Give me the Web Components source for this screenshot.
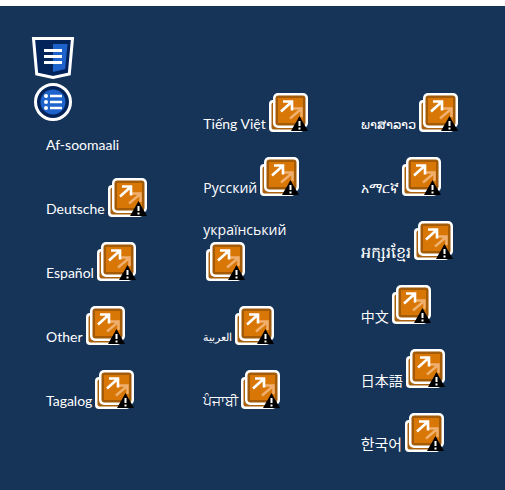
<!DOCTYPE html>
<html lang="en">
<head>
<meta charset="utf-8">
<title>Languages</title>
<style>
  html { background: #fff; }
  body { margin: 0; padding-top: 6px; box-sizing: border-box; min-height: 100vh; display: flex; flex-direction: column; }
</style>
</head>
<body>
<language-panel>
  <language-column>
    <badge-stack slot="top"></badge-stack>
    <language-link lang="so" plain>Af-soomaali</language-link>
    <language-link lang="de">Deutsche</language-link>
    <language-link lang="es">Español</language-link>
    <language-link lang="en">Other</language-link>
    <language-link lang="tl">Tagalog</language-link>
  </language-column>
  <language-column class="lower">
    <language-link lang="vi">Tiếng Việt</language-link>
    <language-link lang="ru">Русский</language-link>
    <language-link lang="uk">український</language-link>
    <language-link lang="ar">العربية</language-link>
    <language-link lang="pa">ਪੰਜਾਬੀ</language-link>
  </language-column>
  <language-column class="lower">
    <language-link lang="lo">ພາສາລາວ</language-link>
    <language-link lang="am">አማርኛ</language-link>
    <language-link lang="km">អក្សរខ្មែរ</language-link>
    <language-link lang="zh">中文</language-link>
    <language-link lang="ja">日本語</language-link>
    <language-link lang="ko">한국어</language-link>
  </language-column>
</language-panel>
<script>
class ShadowElement extends HTMLElement {
  constructor() {
    super();
    this.attachShadow({ mode: 'open' }).innerHTML = this.constructor.markup;
  }
}

customElements.define('language-panel', class extends ShadowElement {
  static markup = `
    <style>
      :host { flex: 1; display: grid; grid-template-columns: repeat(3, minmax(0, 1fr)); column-gap: 25px;
        align-items: start; padding: 31px 27px 12px 31px; background: #163358; color: #fff;
        font: 14px/18px Lato, "Noto Sans", sans-serif; }
      ::slotted(.lower) { padding-top: 56px; }
    </style>
    <slot></slot>`;
});

customElements.define('language-column', class extends ShadowElement {
  static markup = `
    <style>
      :host { display: block; }
      div { display: flex; flex-direction: column; gap: 24px; padding-left: 15px; }
    </style>
    <slot name="top"></slot>
    <div><slot></slot></div>`;
});

customElements.define('badge-stack', class extends ShadowElement {
  static markup = `
    <style>
      :host { display: flex; flex-direction: column; align-items: flex-start; gap: 4px; padding-bottom: 15px; }
      svg { display: block; }
      .round { margin-left: 3px; }
    </style>
    <svg width="44" height="42" viewBox="0 0 44 42" aria-hidden="true">
      <path d="M2.500 1.500H41.500L38.300 37 22 40.500 5.700 37Z" fill="#03245a" stroke="#fff" stroke-width="3"/>
      <path d="M22 7H36.500L34.200 32 22 35Z" fill="#1e62cc"/>
      <path d="M13 13.500H31M13 19.500H31M13 25.500H31" stroke="#fff" stroke-width="3"/>
    </svg>
    <svg class="round" width="38" height="38" viewBox="0 0 38 38" aria-hidden="true">
      <circle cx="19" cy="19" r="17.500" fill="#03245a" stroke="#fff" stroke-width="3"/>
      <circle cx="19" cy="19" r="12.500" fill="#1e62cc"/>
      <path d="M16 13H28M16 19H28M16 25H28" stroke="#fff" stroke-width="2.500"/>
      <circle cx="12" cy="13" r="2" fill="#fff"/><circle cx="12" cy="19" r="2" fill="#fff"/><circle cx="12" cy="25" r="2" fill="#fff"/>
    </svg>`;
});

customElements.define('language-link', class extends ShadowElement {
  static markup = `
    <style>
      :host { display: block; }
      a { display: flex; flex-wrap: wrap; align-items: flex-end; row-gap: 3px; color: inherit; text-decoration: none; }
      svg { flex: none; display: block; margin: 0 0 1px 3px; }
      :host([plain]) svg { display: none; }
      :host(:lang(ru)), :host(:lang(uk)) { font-family: "Open Sans", "Noto Sans", sans-serif; font-weight: 500; }
      :host(:lang(ar)) { font-family: "Liberation Serif", serif; font-size: 11px; }
      :host(:lang(lo)) { font-size: 13px; }
      :host(:lang(km)) { font-size: 16px; }
      :host(:lang(zh)) { font-family: "Noto Sans CJK SC", sans-serif; }
      :host(:lang(ja)) { font-family: "Noto Sans CJK JP", sans-serif; }
      :host(:lang(ko)) { font-family: "Noto Sans CJK KR", sans-serif; font-size: 15px; }
    </style>
    <a href="#"><span><slot></slot></span><svg width="39" height="39" viewBox="0 0 39 39" aria-hidden="true">
      <rect y="7" width="35" height="32" rx="4" fill="#fff"/>
      <rect x="2.500" y="9.500" width="30" height="27" rx="2" fill="#a8620f"/>
      <rect x="4" y="0" width="35" height="35" rx="5" fill="#fff"/>
      <rect x="6.500" y="2.500" width="30" height="30" rx="3" fill="#a35b08"/>
      <rect x="9" y="5" width="25" height="25" fill="#d97706"/>
      <path d="M21 25.500 31 17M24 15.500H32.500V24" fill="none" stroke="#efb070" stroke-width="2.400"/>
      <path d="M12 18.500 22 9.500M14 8.500H23V17.500" fill="none" stroke="#fff" stroke-width="2.600"/>
      <path d="M30.500 23 39 38H22Z" fill="#000"/>
      <path d="M30.500 28V33M30.500 34.500V36.500" stroke="#fff" stroke-width="2"/>
    </svg></a>`;
});
</script>
</body>
</html>
